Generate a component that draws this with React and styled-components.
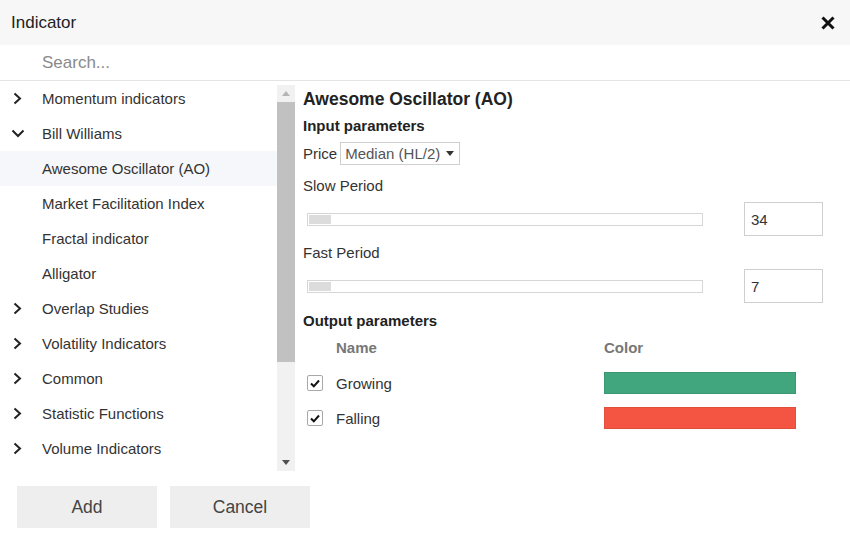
import React from 'react';
import styled, { createGlobalStyle } from 'styled-components';

const Global = createGlobalStyle`
  html, body { margin: 0; padding: 0; background: #fff; }
  body { font-family: "Liberation Sans", Arial, sans-serif; color: #333; }
`

const Dialog = styled.div`
  width: 850px;
  height: 538px;
  display: flex;
  flex-direction: column;
  background: #fff;
  overflow: hidden;
`

const Header = styled.div`
  height: 45px;
  flex: none;
  background: #f7f7f7;
  display: flex;
  align-items: center;
  justify-content: space-between;
  padding: 0 14px 0 11px;
  font-size: 17px;
  color: #222;
`

const CloseBtn = styled.button`
  border: none;
  background: none;
  padding: 0;
  width: 16px;
  height: 16px;
  display: flex;
  cursor: pointer;
`

const SearchBar = styled.div`
  height: 35px;
  flex: none;
  border-bottom: 1px solid #e4e4e4;
  display: flex;
  align-items: center;
  padding-left: 42px;
`

const SearchInput = styled.input`
  border: none;
  outline: none;
  font-family: inherit;
  font-size: 17px;
  color: #333;
  width: 300px;
  padding: 0;
  &::placeholder { color: #8a8a8a; }
`

const Body = styled.div`
  display: flex;
  height: 392px;
  flex: none;
`

const Side = styled.div`
  width: 295px;
  flex: none;
  display: flex;
`

const List = styled.div`
  width: 277px;
  flex: none;
`

const Row = styled.div`
  height: 35px;
  display: flex;
  align-items: center;
  font-size: 15px;
  color: #333;
  background: ${p => (p.$active ? '#f5f7fa' : 'transparent')};
`

const Chevron = styled.span`
  width: 42px;
  flex: none;
  display: flex;
  padding-left: ${p => (p.$down ? '11px' : '13px')};
  box-sizing: border-box;
`

const Scrollbar = styled.div`
  width: 18px;
  margin-top: 4px;
  height: 386px;
  background: #f1f1f1;
  display: flex;
  flex-direction: column;
  align-items: center;
`

const Arrow = styled.div`
  height: 17px;
  flex: none;
  display: flex;
  align-items: center;
  justify-content: center;
  width: 100%;
`

const Thumb = styled.div`
  width: 100%;
  height: 260px;
  background: #c1c1c1;
`

const Spacer = styled.div`
  flex: 1;
`

const Panel = styled.div`
  flex: 1;
  padding: 8px 0 0 8px;
  display: flex;
  flex-direction: column;
`

const Title = styled.div`
  font-size: 17.5px;
  font-weight: bold;
  line-height: 20px;
  color: #222;
`

const Section = styled.div`
  font-size: 15px;
  font-weight: bold;
  line-height: 20px;
  margin-top: ${p => p.$mt || 0}px;
  color: #222;
`

const Label = styled.div`
  font-size: 15px;
  line-height: 20px;
  margin-top: ${p => p.$mt || 0}px;
  color: #333;
`

const PriceRow = styled.div`
  display: flex;
  align-items: center;
  gap: 3px;
  margin-top: 6px;
  font-size: 15px;
`

const Select = styled.div`
  height: 23px;
  width: 120px;
  box-sizing: border-box;
  border: 1px solid #cfcfcf;
  display: flex;
  align-items: center;
  justify-content: space-between;
  padding: 0 5px 0 4px;
  color: #555;
  font-size: 15px;
`

const SliderRow = styled.div`
  display: flex;
  align-items: center;
  margin-top: 6px;
  padding-left: 4px;
  gap: 41px;
`

const Track = styled.div`
  width: 396px;
  height: 13px;
  box-sizing: border-box;
  border: 1px solid #d6d6d6;
  padding: 1px;
  display: flex;
`

const Knob = styled.div`
  width: 22px;
  height: 100%;
  background: #dcdcdc;
`

const NumBox = styled.div`
  width: 79px;
  height: 34px;
  box-sizing: border-box;
  border: 1px solid #cfcfcf;
  display: flex;
  align-items: center;
  padding-left: 6px;
  font-size: 15px;
  color: #333;
`

const OutGrid = styled.div`
  display: grid;
  grid-template-columns: 29px 268px 192px;
  align-items: center;
  padding-left: 4px;
  margin-top: ${p => p.$mt || 0}px;
`

const ColHead = styled.div`
  font-size: 15px;
  line-height: 20px;
  color: #777;
  font-weight: bold;
  grid-column: ${p => p.$col};
`

const Check = styled.span`
  width: 16px;
  height: 16px;
  box-sizing: border-box;
  border: 1px solid #a8a8a8;
  border-radius: 2px;
  display: flex;
  align-items: center;
  justify-content: center;
  background: #fff;
`

const OutName = styled.div`
  font-size: 15px;
  color: #333;
`

const Swatch = styled.div`
  height: 22px;
  background: ${p => p.$color};
  border: 1px solid rgba(0, 0, 0, 0.08);
  box-sizing: border-box;
`

const Footer = styled.div`
  display: flex;
  gap: 13px;
  padding: 13px 0 0 17px;
`

const Button = styled.button`
  width: 140px;
  height: 42px;
  border: none;
  background: #eeeeee;
  font-family: inherit;
  font-size: 17.5px;
  color: #444;
  cursor: pointer;
`

const RightChevron = () => (
  <svg width="9" height="13" viewBox="0 0 9 13">
    <path d="M1.5 1.5 L7 6.5 L1.5 11.5" fill="none" stroke="#222" strokeWidth="2" />
  </svg>
)

const DownChevron = () => (
  <svg width="14" height="9" viewBox="0 0 14 9">
    <path d="M1.5 1.5 L7 7 L12.5 1.5" fill="none" stroke="#222" strokeWidth="2" />
  </svg>
)

const CheckMark = () => (
  <svg width="10" height="9" viewBox="0 0 10 9">
    <path d="M1 4.5 L3.8 7.3 L9 1.5" fill="none" stroke="#111" strokeWidth="2" />
  </svg>
)

const items = [
  { name: 'Momentum indicators', type: 'closed' },
  { name: 'Bill Williams', type: 'open' },
  { name: 'Awesome Oscillator (AO)', active: true },
  { name: 'Market Facilitation Index' },
  { name: 'Fractal indicator' },
  { name: 'Alligator' },
  { name: 'Overlap Studies', type: 'closed' },
  { name: 'Volatility Indicators', type: 'closed' },
  { name: 'Common', type: 'closed' },
  { name: 'Statistic Functions', type: 'closed' },
  { name: 'Volume Indicators', type: 'closed' },
]

const outputs = [
  { name: 'Growing', color: '#41a57d' },
  { name: 'Falling', color: '#f35542' },
]

export default function App() {
  return (
    <Dialog>
      <Global />
      <Header>
        <span>Indicator</span>
        <CloseBtn aria-label="close">
          <svg width="16" height="16" viewBox="0 0 16 16">
            <path d="M2.5 2.5 L13.5 13.5 M13.5 2.5 L2.5 13.5" stroke="#111" strokeWidth="3" />
          </svg>
        </CloseBtn>
      </Header>
      <SearchBar>
        <SearchInput placeholder="Search..." />
      </SearchBar>
      <Body>
        <Side>
          <List>
            {items.map(it => (
              <Row key={it.name} $active={it.active}>
                <Chevron $down={it.type === 'open'}>
                  {it.type === 'closed' && <RightChevron />}
                  {it.type === 'open' && <DownChevron />}
                </Chevron>
                {it.name}
              </Row>
            ))}
          </List>
          <Scrollbar>
            <Arrow>
              <svg width="8" height="5" viewBox="0 0 8 5"><path d="M0 5 L4 0 L8 5Z" fill="#b5b5b5" /></svg>
            </Arrow>
            <Thumb />
            <Spacer />
            <Arrow>
              <svg width="8" height="5" viewBox="0 0 8 5"><path d="M0 0 L8 0 L4 5Z" fill="#505050" /></svg>
            </Arrow>
          </Scrollbar>
        </Side>
        <Panel>
          <Title>Awesome Oscillator (AO)</Title>
          <Section $mt={7}>Input parameters</Section>
          <PriceRow>
            <span>Price</span>
            <Select>
              <span>Median (HL/2)</span>
              <svg width="8" height="5" viewBox="0 0 8 5"><path d="M0 0 L8 0 L4 5Z" fill="#333" /></svg>
            </Select>
          </PriceRow>
          <Label $mt={11}>Slow Period</Label>
          <SliderRow>
            <Track><Knob /></Track>
            <NumBox>34</NumBox>
          </SliderRow>
          <Label $mt={7}>Fast Period</Label>
          <SliderRow>
            <Track><Knob /></Track>
            <NumBox>7</NumBox>
          </SliderRow>
          <Section $mt={8}>Output parameters</Section>
          <OutGrid $mt={7}>
            <ColHead $col={2}>Name</ColHead>
            <ColHead $col={3}>Color</ColHead>
          </OutGrid>
          {outputs.map((o, i) => (
            <OutGrid key={o.name} $mt={i === 0 ? 14 : 13}>
              <Check><CheckMark /></Check>
              <OutName>{o.name}</OutName>
              <Swatch $color={o.color} />
            </OutGrid>
          ))}
        </Panel>
      </Body>
      <Footer>
        <Button>Add</Button>
        <Button>Cancel</Button>
      </Footer>
    </Dialog>
  );
}
